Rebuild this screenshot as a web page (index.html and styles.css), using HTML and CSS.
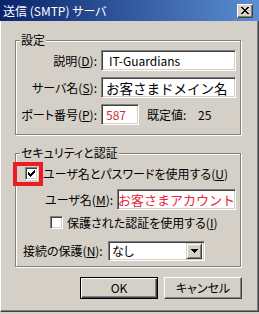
FILE: index.html
```html
<!DOCTYPE html>
<html lang="ja">
<head>
<meta charset="utf-8">
<title>送信 (SMTP) サーバ</title>
<link rel="stylesheet" href="styles.css">
</head>
<body>
<div class="window">
  <div class="titlebar">
    <span class="title">送信 (SMTP) サーバ</span>
    <span class="close"><svg width="8" height="7" viewBox="0 0 8 7" shape-rendering="crispEdges"><path d="M0 0h2v1H0z M6 0h2v1H6z M1 1h2v1H1z M5 1h2v1H5z M2 2h4v1H2z M3 3h2v1H3z M2 4h4v1H2z M1 5h2v1H1z M5 5h2v1H5z M0 6h2v1H0z M6 6h2v1H6z"/></svg></span>
  </div>
  <div class="body">
    <div class="group g1">
      <span class="legend">設定</span>
      <div class="form-grid">
        <span class="lbl">説明(<u>D</u>):</span>
        <div class="field wide"><span class="val latin">IT-Guardians</span></div>
        <span class="lbl">サーバ名(<u>S</u>):</span>
        <div class="field wide"><span class="val big">お客さまドメイン名</span></div>
        <span class="lbl">ポート番号(<u>P</u>):</span>
        <div class="port-row">
          <div class="field port"><span class="val red">587</span></div>
          <span class="def-lbl">既定値:</span>
          <span class="def-val">25</span>
        </div>
      </div>
    </div>
    <div class="group g2">
      <span class="legend">セキュリティと認証</span>
      <div class="row check-row r1">
        <span class="checkbox"><svg width="7" height="7" viewBox="0 0 7 7" shape-rendering="crispEdges"><path d="M6 0h1v1H6z M5 1h2v1H5z M0 2h1v1H0z M4 2h3v1H4z M0 3h2v1H0z M3 3h3v1H3z M0 4h5v1H0z M1 5h3v1H1z M2 6h1v1H2z"/></svg></span>
        <span class="ctext">ユーザ名とパスワードを使用する(<u>U</u>)</span>
      </div>
      <div class="row r2">
        <span class="lbl2">ユーザ名(<u>M</u>):</span>
        <div class="field user"><span class="val big2 red2">お客さまアカウント</span></div>
      </div>
      <div class="row check-row r3">
        <span class="checkbox"></span>
        <span class="ctext">保護された認証を使用する(<u>I</u>)</span>
      </div>
      <div class="row r4">
        <span class="lbl3">接続の保護(<u>N</u>):</span>
        <div class="field select">
          <span class="val">なし</span>
          <span class="drop"><svg width="7" height="4" viewBox="0 0 7 4" shape-rendering="crispEdges"><path d="M0 0h7v1H0z M1 1h5v1H1z M2 2h3v1H2z M3 3h1v1H3z"/></svg></span>
        </div>
      </div>
      <span class="highlight"></span>
    </div>
    <div class="buttons">
      <span class="btn default">OK</span>
      <span class="btn">キャンセル</span>
    </div>
  </div>
</div>
</body>
</html>
```

FILE: styles.css
```css
* { box-sizing: border-box; }
html, body { margin: 0; padding: 0; }
body {
  background: #d4d0c8;
  font-family: "Noto Sans CJK JP", "Noto Sans", sans-serif;
  font-size: 12px;
  line-height: 14px;
  color: #000;
  font-feature-settings: "palt";
}
u { text-decoration: underline; text-underline-offset: 1px; }

.window {
  width: 259px;
  height: 314px;
  background: #d4d0c8;
  display: flex;
  flex-direction: column;
  overflow: hidden;
}

.titlebar {
  flex: none;
  height: 21px;
  background: linear-gradient(to right, #0a246a, #5b8ed2);
  display: flex;
  align-items: center;
  padding-left: 3px;
}
.title { color: #fff; font-size: 12px; line-height: 14px; }
.close {
  margin-left: auto;
  margin-right: 6px;
  width: 16px;
  height: 14px;
  background: #d4d0c8;
  border-style: solid;
  border-width: 1px;
  border-color: #fff #404040 #404040 #fff;
  box-shadow: inset -1px -1px 0 #808080;
  display: flex;
  align-items: center;
  justify-content: center;
}
.close svg { display: block; fill: #000; margin-left: -1px; }

.body {
  flex: none;
  height: 291px;
  border-left: 1px solid #fff;
  border-right: 1px solid #404040;
  border-bottom: 1px solid #404040;
  box-shadow: inset -1px -1px 0 #808080;
  padding: 19px 16px 0 14px;
}

.group {
  position: relative;
  width: 226px;
  border: 1px solid #808080;
  box-shadow: inset 1px 1px 0 #fff, 1px 1px 0 #fff;
}
.legend {
  position: absolute;
  left: 4px;
  top: -8px;
  padding: 0 1px;
  background: #d4d0c8;
  line-height: 14px;
  white-space: nowrap;
}

.g1 { height: 95px; padding-top: 9px; }
.form-grid {
  display: grid;
  grid-template-columns: 81px 1fr;
  column-gap: 4px;
  row-gap: 6px;
  align-items: center;
}
.lbl { text-align: right; white-space: nowrap; }

.field {
  height: 21px;
  background: #fff;
  border-style: solid;
  border-width: 1px;
  border-color: #808080 #fff #fff #808080;
  box-shadow: inset 1px 1px 0 #404040, inset -1px -1px 0 #d4d0c8;
  padding: 0 4px;
  display: flex;
  align-items: center;
  overflow: hidden;
  white-space: nowrap;
}
.wide { width: 135px; }
.val { line-height: 16px; }
.latin { padding-left: 3px; }
.big { font-size: 13.5px; font-feature-settings: normal; }
.big2 { font-size: 13px; font-feature-settings: normal; }
.red { color: #c8303c; }
.red2 { color: #e8283a; }

.port-row { display: flex; align-items: center; }
.port { width: 38px; }
.def-lbl { margin-left: 8px; width: 51px; }

.g2 { margin-top: 18px; height: 114px; padding-top: 13px; }
.row { display: flex; align-items: center; }
.check-row { height: 13px; }
.checkbox {
  flex: none;
  width: 13px;
  height: 13px;
  background: #fff;
  border-style: solid;
  border-width: 1px;
  border-color: #808080 #fff #fff #808080;
  box-shadow: inset 1px 1px 0 #404040, inset -1px -1px 0 #d4d0c8;
  display: flex;
  align-items: center;
  justify-content: center;
}
.checkbox svg { display: block; fill: #000; }
.ctext { white-space: nowrap; }
.r1 { padding-left: 9px; gap: 5px; }
.r2 { margin-top: 9px; padding-left: 29px; }
.lbl2 { white-space: nowrap; }
.user { width: 119px; margin-left: auto; margin-right: 4px; padding: 0; }
.r3 { margin-top: 6px; padding-left: 34px; gap: 4px; }
.r4 { margin-top: 12px; padding-left: 7px; }
.lbl3 { width: 85px; white-space: nowrap; }
.select { width: 97px; height: 20px; padding: 0 2px 0 3px; }
.drop {
  margin-left: auto;
  width: 16px;
  height: 16px;
  background: #d4d0c8;
  border-style: solid;
  border-width: 1px;
  border-color: #d4d0c8 #404040 #404040 #d4d0c8;
  box-shadow: inset 1px 1px 0 #fff, inset -1px -1px 0 #808080;
  display: flex;
  align-items: center;
  justify-content: center;
}
.drop svg { display: block; fill: #000; }

.highlight {
  position: absolute;
  left: -3px;
  top: 8px;
  width: 30px;
  height: 24px;
  border: 4px solid #ec1c24;
}

.buttons {
  margin-top: 10px;
  display: flex;
  justify-content: flex-end;
  gap: 6px;
}
.btn {
  width: 78px;
  height: 22px;
  display: flex;
  align-items: center;
  justify-content: center;
  border-style: solid;
  border-width: 1px;
  border-color: #fff #404040 #404040 #fff;
  box-shadow: inset -1px -1px 0 #808080;
  white-space: nowrap;
}
.btn.default {
  border: 1px solid #000;
  box-shadow: inset 1px 1px 0 #fff, inset -1px -1px 0 #404040, inset -2px -2px 0 #808080;
}
```
